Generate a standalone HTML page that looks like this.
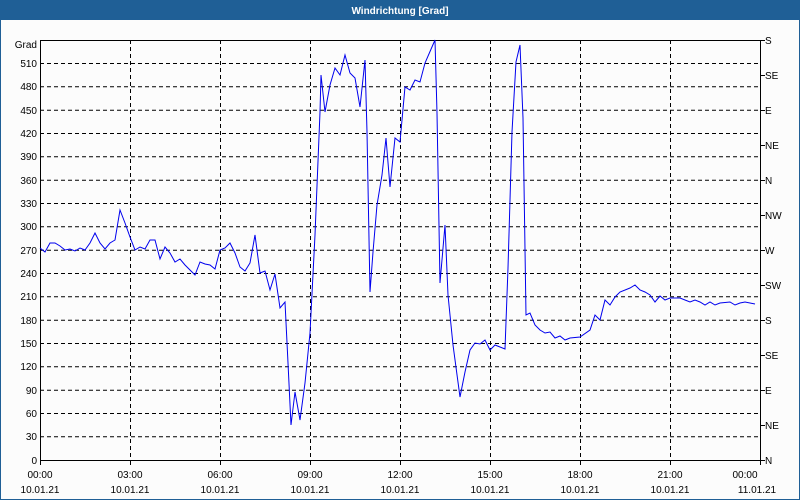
<!DOCTYPE html>
<html><head><meta charset="utf-8"><style>
html,body{margin:0;padding:0;width:800px;height:500px;overflow:hidden;background:#fff}
</style></head><body>
<svg width="800" height="500" xmlns="http://www.w3.org/2000/svg" font-family="Liberation Sans, sans-serif" font-size="10">
<rect x="0" y="0" width="800" height="500" fill="#fcfcfc"/>
<rect x="0.5" y="0.5" width="799" height="499" fill="none" stroke="#1f5f96"/>
<rect x="0" y="0" width="800" height="20" fill="#1f5f96"/>
<text x="400" y="14" text-anchor="middle" fill="#fff" font-weight="bold" font-size="10">Windrichtung [Grad]</text>
<g stroke="#000" stroke-dasharray="4,3" stroke-width="1">
<line x1="40" y1="63.5" x2="760" y2="63.5"/><line x1="40" y1="86.8" x2="760" y2="86.8"/><line x1="40" y1="110.2" x2="760" y2="110.2"/><line x1="40" y1="133.5" x2="760" y2="133.5"/><line x1="40" y1="156.8" x2="760" y2="156.8"/><line x1="40" y1="180.2" x2="760" y2="180.2"/><line x1="40" y1="203.5" x2="760" y2="203.5"/><line x1="40" y1="226.8" x2="760" y2="226.8"/><line x1="40" y1="250.2" x2="760" y2="250.2"/><line x1="40" y1="273.5" x2="760" y2="273.5"/><line x1="40" y1="296.8" x2="760" y2="296.8"/><line x1="40" y1="320.2" x2="760" y2="320.2"/><line x1="40" y1="343.5" x2="760" y2="343.5"/><line x1="40" y1="366.8" x2="760" y2="366.8"/><line x1="40" y1="390.2" x2="760" y2="390.2"/><line x1="40" y1="413.5" x2="760" y2="413.5"/><line x1="40" y1="436.8" x2="760" y2="436.8"/>
<line x1="130.5" y1="40" x2="130.5" y2="460"/><line x1="220.5" y1="40" x2="220.5" y2="460"/><line x1="310.5" y1="40" x2="310.5" y2="460"/><line x1="400.5" y1="40" x2="400.5" y2="460"/><line x1="490.5" y1="40" x2="490.5" y2="460"/><line x1="580.5" y1="40" x2="580.5" y2="460"/><line x1="670.5" y1="40" x2="670.5" y2="460"/>
</g>
<rect x="40.5" y="40.5" width="720" height="420" fill="none" stroke="#000"/>
<g stroke="#000">
<line x1="40.5" y1="460" x2="40.5" y2="465"/><line x1="130.5" y1="460" x2="130.5" y2="465"/><line x1="220.5" y1="460" x2="220.5" y2="465"/><line x1="310.5" y1="460" x2="310.5" y2="465"/><line x1="400.5" y1="460" x2="400.5" y2="465"/><line x1="490.5" y1="460" x2="490.5" y2="465"/><line x1="580.5" y1="460" x2="580.5" y2="465"/><line x1="670.5" y1="460" x2="670.5" y2="465"/><line x1="760.5" y1="460" x2="760.5" y2="465"/>
<line x1="760" y1="40.5" x2="765" y2="40.5"/><line x1="760" y1="75.5" x2="765" y2="75.5"/><line x1="760" y1="110.5" x2="765" y2="110.5"/><line x1="760" y1="145.5" x2="765" y2="145.5"/><line x1="760" y1="180.5" x2="765" y2="180.5"/><line x1="760" y1="215.5" x2="765" y2="215.5"/><line x1="760" y1="250.5" x2="765" y2="250.5"/><line x1="760" y1="285.5" x2="765" y2="285.5"/><line x1="760" y1="320.5" x2="765" y2="320.5"/><line x1="760" y1="355.5" x2="765" y2="355.5"/><line x1="760" y1="390.5" x2="765" y2="390.5"/><line x1="760" y1="425.5" x2="765" y2="425.5"/><line x1="760" y1="460.5" x2="765" y2="460.5"/>
</g>
<g text-anchor="end" fill="#000">
<text x="37" y="48">Grad</text>
<text x="37" y="67">510</text><text x="37" y="90">480</text><text x="37" y="114">450</text><text x="37" y="137">420</text><text x="37" y="160">390</text><text x="37" y="184">360</text><text x="37" y="207">330</text><text x="37" y="230">300</text><text x="37" y="254">270</text><text x="37" y="277">240</text><text x="37" y="300">210</text><text x="37" y="324">180</text><text x="37" y="347">150</text><text x="37" y="370">120</text><text x="37" y="394">90</text><text x="37" y="417">60</text><text x="37" y="440">30</text><text x="37" y="464">0</text>
</g>
<g fill="#000">
<text x="765" y="44">S</text><text x="765" y="79">SE</text><text x="765" y="114">E</text><text x="765" y="149">NE</text><text x="765" y="184">N</text><text x="765" y="219">NW</text><text x="765" y="254">W</text><text x="765" y="289">SW</text><text x="765" y="324">S</text><text x="765" y="359">SE</text><text x="765" y="394">E</text><text x="765" y="429">NE</text><text x="765" y="464">N</text>
</g>
<g text-anchor="middle" fill="#000">
<text x="40" y="478">00:00</text><text x="130" y="478">03:00</text><text x="220" y="478">06:00</text><text x="310" y="478">09:00</text><text x="400" y="478">12:00</text><text x="490" y="478">15:00</text><text x="580" y="478">18:00</text><text x="670" y="478">21:00</text><text x="745" y="478">00:00</text>
<text x="40" y="493">10.01.21</text><text x="130" y="493">10.01.21</text><text x="220" y="493">10.01.21</text><text x="310" y="493">10.01.21</text><text x="400" y="493">10.01.21</text><text x="490" y="493">10.01.21</text><text x="580" y="493">10.01.21</text><text x="670" y="493">10.01.21</text><text x="757" y="493">11.01.21</text>
</g>
<polyline fill="none" stroke="#0000ee" stroke-width="1" points="40,248 45,252 50,243 55,243 60,246 65,250 70,249 75,251 80,248 85,250 90,243 95,233 100,243 105,249 110,243 115,240 120,210 125,223 130,237 135,250 140,247 145,249 150,240 155,240 160,259 165,247 170,253 175,262 180,259 185,265 190,270 195,275 200,262 205,264 210,265 215,269 220,250 225,248 230,243 235,253 240,267 245,271 250,263 255,235 260,273 265,271 270,290 275,274 280,308 285,302 288,363 291,425 295,392 300,420 305,383 310,333 315,235 320,112 321,75 325,112 330,85 335,68 340,75 345,55 350,73 355,78 360,107 365,60 367,132 370,292 373,252 377,205 382,175 386,138 390,187 395,138 400,142 405,87 410,90 415,80 420,82 425,63 435,40 437,113 440,283 445,225 448,295 453,345 460,397 465,372 470,350 475,343 480,344 485,340 490,350 495,345 505,349 508,268 512,132 516,62 520,45 523,118 526,315 530,313 535,325 540,330 545,333 550,332 555,338 560,336 565,340 570,338 580,337 590,330 595,315 600,320 605,300 610,305 615,297 620,292 630,288 635,285 640,290 645,292 650,295 655,302 660,296 665,300 670,298 680,298 685,300 690,302 695,300 700,302 705,305 710,302 715,305 720,303 730,302 735,305 740,303 745,302 755,304"/>
</svg>
</body></html>
